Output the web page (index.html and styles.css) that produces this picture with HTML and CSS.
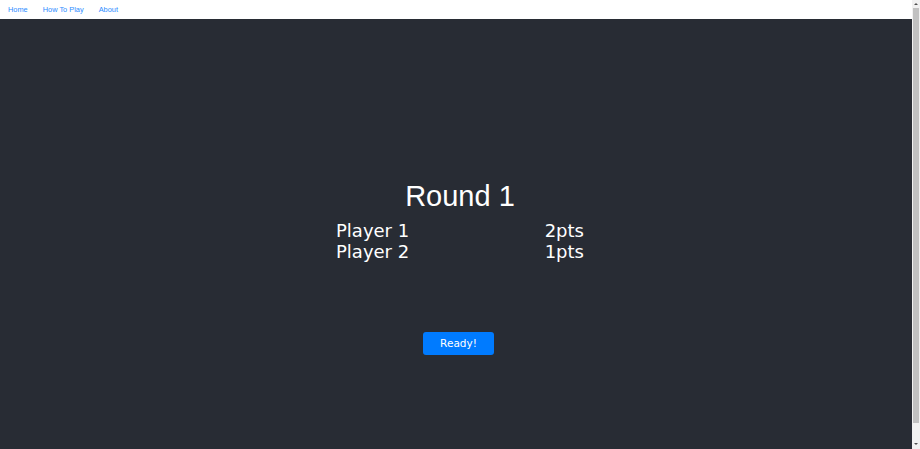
FILE: index.html
```html
<!DOCTYPE html>
<html lang="en">
<head>
<meta charset="utf-8">
<title>Round 1</title>
<link rel="stylesheet" href="styles.css">
</head>
<body>
  <nav class="topnav">
    <a class="navlink" href="#">Home</a>
    <a class="navlink" href="#">How To Play</a>
    <a class="navlink" href="#">About</a>
  </nav>
  <main class="stage">
    <h1 class="round-title">Round 1</h1>
    <div class="scores">
      <div class="score-row"><span class="player">Player 1</span><span class="pts">2pts</span></div>
      <div class="score-row"><span class="player">Player 2</span><span class="pts">1pts</span></div>
    </div>
    <button class="ready-btn" type="button">Ready!</button>
  </main>
  <div class="fake-scrollbar" aria-hidden="true">
    <span class="sb-arrow sb-up"></span>
    <span class="sb-thumb"></span>
    <span class="sb-arrow sb-down"></span>
  </div>
</body>
</html>
```

FILE: styles.css
```css
html, body {
  margin: 0;
  padding: 0;
  height: 100%;
  overflow: hidden;
}

body {
  background: #282c34;
  font-family: "Liberation Sans", Arial, sans-serif;
}

.topnav {
  background: #ffffff;
  height: 19px;
  display: flex;
  align-items: center;
  gap: 15px;
  padding-left: 8px;
  box-sizing: border-box;
}

.navlink {
  color: #2d8cff;
  font-family: "Liberation Sans", Arial, sans-serif;
  font-size: 7.4px;
  text-decoration: none;
  line-height: 1;
  padding-top: 1px;
}

.stage {
  display: flex;
  flex-direction: column;
  align-items: center;
  padding-top: 160px;
  min-height: 100vh;
  box-sizing: border-box;
}

.round-title {
  margin: 0;
  color: #ffffff;
  font-family: "Liberation Sans", Arial, sans-serif;
  font-weight: normal;
  font-size: 29px;
  line-height: 34.5px;
}

.scores {
  margin-top: 6px;
  width: 248px;
  color: #ffffff;
  font-family: "DejaVu Sans", Verdana, sans-serif;
  font-size: 18px;
  line-height: 21.6px;
}

.score-row {
  display: flex;
  justify-content: space-between;
}

.ready-btn {
  margin-top: 69px;
  margin-right: 3px;
  background: #007bff;
  color: #ffffff;
  border: none;
  border-radius: 3px;
  font-family: "DejaVu Sans", Verdana, sans-serif;
  font-size: 10.5px;
  line-height: 13px;
  padding: 5px 0;
  width: 71px;
  height: 23px;
  box-sizing: border-box;
  cursor: pointer;
}

.fake-scrollbar {
  position: fixed;
  top: 0;
  right: 0;
  width: 8px;
  height: 100%;
  background: #f1f1f1;
  display: flex;
  flex-direction: column;
  align-items: center;
}

.sb-arrow {
  width: 0;
  height: 0;
  border-left: 2.5px solid transparent;
  border-right: 2.5px solid transparent;
}

.sb-up {
  margin-top: 3px;
  border-bottom: 2.5px solid #505050;
}

.sb-thumb {
  margin-top: 2.5px;
  width: 6px;
  height: 415px;
  background: #c1c1c1;
}

.sb-down {
  margin-top: 20px;
  border-top: 2.5px solid #505050;
}
```
